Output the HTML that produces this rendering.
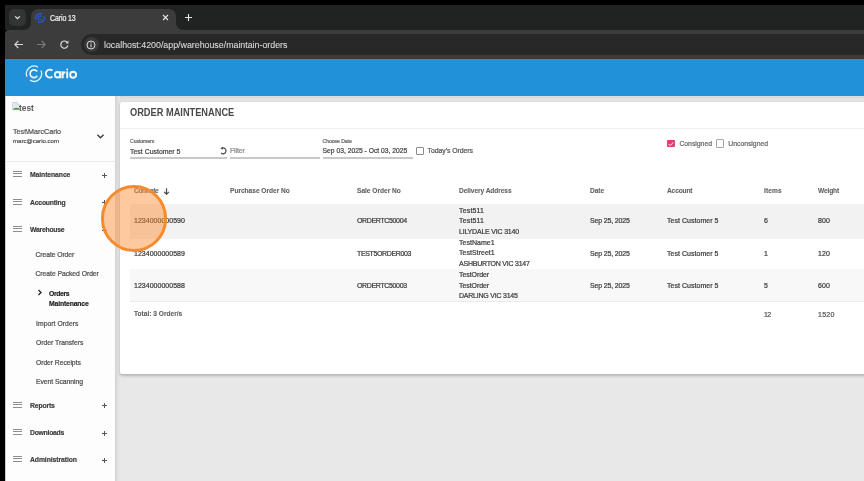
<!DOCTYPE html>
<html><head><meta charset="utf-8">
<style>
*{box-sizing:border-box;margin:0;padding:0}
html,body{width:864px;height:481px;overflow:hidden;background:#000;font-family:"Liberation Sans",sans-serif}
body{filter:blur(0.45px)}
.t{-webkit-text-stroke:0.22px currentColor}
.hd{-webkit-text-stroke:0.1px currentColor}
.sb{-webkit-text-stroke:0.18px currentColor}
.a{position:absolute}
.t{position:absolute;white-space:nowrap;line-height:1}
#tabstrip{left:5px;top:5px;width:859px;height:25px;background:#212222}
#ddbtn{left:9px;top:9px;width:17px;height:17px;border-radius:5px;background:#333434}
#tab{left:31px;top:9px;width:145px;height:22px;background:#3c3c3c;border-radius:7px 7px 0 0}
#toolbar{left:5px;top:30px;width:859px;height:29px;background:#3c3c3c;border-radius:4px 0 0 0}
#omni{left:81px;top:34px;width:800px;height:21px;border-radius:11px;background:#282828}
#infochip{left:84px;top:37px;width:15px;height:15px;border-radius:50%;background:#3a3a3a}
#header{left:5px;top:59px;width:859px;height:37.5px;background:#2192d9}
#hline{left:5px;top:58px;width:859px;height:1px;background:#33393d}
#page{left:5px;top:96px;width:859px;height:385px;background:linear-gradient(#d8d8d8 0,#dedede 2px,#e4e4e4 4px,#e8e8e8 6px)}
#sidebar{left:5px;top:96px;width:110px;height:385px;background:#fdfdfd;border-left:1px solid #cfcfcf}
#sbshadow{left:115px;top:96px;width:5px;height:385px;background:linear-gradient(to right,#d3d3d3 0,#d9d9d9 1.5px,#e1e1e1 3px,#e8e8e8 5px)}
#card{left:120px;top:102px;width:760px;height:272px;background:#fff;border-radius:2px;box-shadow:0 1.5px 3px rgba(0,0,0,.22),0 0 1px rgba(0,0,0,.12)}
.row{left:130px;width:740px;position:absolute}
.hd{color:#636363;font-weight:700;font-size:6.6px}
.td{color:#3c3c3c;font-size:7px}
.sb{color:#3d3d3d;font-weight:700;font-size:6.8px}
.sub{color:#505050;font-size:6.8px}
.ham{position:absolute;left:13px;width:9.2px;height:6px;border-top:1.2px solid #8e8e8e;border-bottom:1.2px solid #8e8e8e}
.ham:after{content:"";position:absolute;left:0;top:1.2px;width:9.2px;height:1.2px;background:#8e8e8e}
.plus{position:absolute;width:5px;height:5px}
.plus:before{content:"";position:absolute;left:0;top:1.9px;width:5px;height:1.2px;background:#555}
.plus:after{content:"";position:absolute;left:1.9px;top:0;width:1.2px;height:5px;background:#555}
</style></head><body>
<div id="tabstrip" class="a"></div>
<div id="ddbtn" class="a"></div>
<svg class="a" style="left:14px;top:14px" width="7" height="7" viewBox="0 0 7 7"><path d="M1.2 2.4 L3.5 4.7 L5.8 2.4" fill="none" stroke="#e6e6e6" stroke-width="1.3"/></svg>
<div id="tab" class="a"></div>
<!-- tab flares -->
<svg class="a" style="left:23px;top:22px" width="8" height="8" viewBox="0 0 8 8"><path d="M0 8 Q8 8 8 0 L8 8 Z" fill="#3c3c3c"/></svg>
<svg class="a" style="left:176px;top:22px" width="8" height="8" viewBox="0 0 8 8"><path d="M8 8 Q0 8 0 0 L0 8 Z" fill="#3c3c3c"/></svg>
<!-- favicon -->
<svg class="a" style="left:34px;top:11.5px" width="12" height="12" viewBox="0 0 12 12"><g fill="none" stroke="#2954ad"><path d="M8.28 2.35 A4.3 4.3 0 0 0 2.07 7.75" stroke-width="1.7"/><path d="M3.72 9.65 A4.3 4.3 0 0 0 9.93 4.25" stroke-width="1.7"/><path d="M7.64 4.85 A2.0 2.0 0 1 0 7.64 7.15" stroke-width="1.6"/></g></svg>
<div class="t" style="left:50px;top:13.5px;font-size:8.4px;color:#f0f0f0;letter-spacing:-0.15px;transform:scaleX(0.84);transform-origin:0 0">Cario 13</div>
<svg class="a" style="left:162px;top:14px" width="7" height="7" viewBox="0 0 7 7"><path d="M1 1 L6 6 M6 1 L1 6" stroke="#e6e6e6" stroke-width="1.1"/></svg>
<svg class="a" style="left:184px;top:13px" width="9" height="9" viewBox="0 0 9 9"><path d="M4.5 1 V8 M1 4.5 H8" stroke="#e6e6e6" stroke-width="1.1"/></svg>

<div id="toolbar" class="a"></div>
<!-- back/forward/reload -->
<svg class="a" style="left:13px;top:39px" width="11" height="11" viewBox="0 0 11 11"><path d="M10 5.5 H1.8 M5.3 2 L1.8 5.5 L5.3 9" fill="none" stroke="#d8d8d8" stroke-width="1.1"/></svg>
<svg class="a" style="left:36px;top:39px" width="11" height="11" viewBox="0 0 11 11"><path d="M1 5.5 H9.2 M5.7 2 L9.2 5.5 L5.7 9" fill="none" stroke="#7a7a7a" stroke-width="1.1"/></svg>
<svg class="a" style="left:59px;top:39px" width="11" height="11" viewBox="0 0 11 11"><path d="M8.6 4 A3.6 3.6 0 1 0 8.9 6.4" fill="none" stroke="#d8d8d8" stroke-width="1.2"/><path d="M9.5 1.6 V4.6 H6.5 Z" fill="#d8d8d8"/></svg>
<div id="omni" class="a"></div>
<div id="infochip" class="a"></div>
<svg class="a" style="left:86px;top:39.5px" width="10" height="10" viewBox="0 0 10 10"><circle cx="5" cy="5" r="4" fill="none" stroke="#d8d8d8" stroke-width="1"/><path d="M5 4.3 V7.3" stroke="#d8d8d8" stroke-width="1"/><circle cx="5" cy="2.9" r=".6" fill="#d8d8d8"/></svg>
<div class="t" style="left:104px;top:41.3px;font-size:8.85px;color:#d8d8d8;-webkit-text-stroke:0.1px currentColor;letter-spacing:-0.01px">localhost:4200/app/warehouse/maintain-orders</div>

<div id="header" class="a"></div><div id="hline" class="a"></div>
<svg class="a" style="left:24px;top:63px" width="22" height="22" viewBox="0 0 22 22"><path d="M14.03 4.26 A7.6 7.6 0 0 0 3.06 13.79" fill="none" stroke="#dff2fc" stroke-width="1.3"/><path d="M5.99 17.16 A7.6 7.6 0 0 0 16.94 7.61" fill="none" stroke="#dff2fc" stroke-width="1.3"/><path d="M13.27 8.58 A3.9 3.9 0 1 0 13.27 12.82" fill="none" stroke="#e8f6fd" stroke-width="1.7"/></svg>
<svg class="a" style="left:40px;top:62px" width="42" height="22" viewBox="0 0 42 22"><g fill="none" stroke="#f2f9fd" stroke-width="1.9"><path d="M12.4 8.6 A3.95 3.95 0 1 0 12.4 14.5"/><circle cx="17.6" cy="12.75" r="2.75"/><path d="M20.35 9.3 V16.3"/><path d="M22.7 9.3 V16.3 M22.7 12.9 A3.3 3.3 0 0 1 25.4 10.1"/><path d="M27.2 9.3 V16.3"/><circle cx="33.1" cy="12.75" r="2.95"/></g><circle cx="27.2" cy="7.5" r=".9" fill="#f2f9fd"/></svg>

<div id="page" class="a"></div>
<div id="sidebar" class="a"></div>
<div id="sbshadow" class="a"></div>

<!-- sidebar content -->
<svg class="a" style="left:12px;top:101.5px" width="8" height="8.5" viewBox="0 0 8 8.5"><path d="M.4 .4 H5.2 L7.4 2.6 V8.1 H.4 Z" fill="#dfe8f4" stroke="#c2c8d0" stroke-width=".7"/><path d="M5.2 .4 V2.6 H7.4" fill="#fff" stroke="#c2c8d0" stroke-width=".6"/><path d="M.8 7.8 Q2.5 4.8 7 6.4 V7.8 Z" fill="#4f9a3a"/></svg>
<div class="t" style="left:19px;top:103.6px;font-size:8.4px;color:#5a5a5a;font-weight:700;-webkit-text-stroke:0;letter-spacing:-0.035px">test</div>
<div class="t" style="left:13px;top:128.6px;font-size:7.15px;color:#555;letter-spacing:0.005px">Test\MarcCario</div>
<div class="t" style="left:13px;top:137.6px;font-size:6.07px;color:#505050;letter-spacing:0.011px">marc@cario.com</div>
<svg class="a" style="left:96px;top:133.2px" width="9" height="7" viewBox="0 0 9 7"><path d="M1.4 1.7 L4.5 4.8 L7.6 1.7" fill="none" stroke="#3a3a3a" stroke-width="1.3"/></svg>
<div class="a" style="left:6px;top:161.3px;width:109px;height:1px;background:#ebebeb"></div>

<div class="ham" style="top:171.1px"></div><div class="t sb" style="left:30px;top:172.4px;letter-spacing:-0.079px">Maintenance</div><div class="plus" style="left:102px;top:172.8px"></div>
<div class="ham" style="top:198.6px"></div><div class="t sb" style="left:30px;top:199.5px;letter-spacing:-0.192px">Accounting</div><div class="plus" style="left:102px;top:200.3px"></div>
<div class="ham" style="top:226.1px"></div><div class="t sb" style="left:30px;top:227.2px;letter-spacing:-0.225px">Warehouse</div><div class="plus" style="left:102px;top:227.8px"></div>

<div class="t sub" style="left:35.5px;top:251.8px;letter-spacing:-0.082px">Create Order</div>
<div class="t sub" style="left:35.5px;top:271.3px;letter-spacing:-0.048px">Create Packed Order</div>
<svg class="a" style="left:37px;top:288.5px" width="6" height="7" viewBox="0 0 6 7"><path d="M1.5 1 L4 3.5 L1.5 6" fill="none" stroke="#222" stroke-width="1.3"/></svg>
<div class="t sb" style="left:49px;top:290.8px;color:#222;letter-spacing:-0.342px">Orders</div>
<div class="t sb" style="left:49px;top:301.2px;color:#222;letter-spacing:-0.149px">Maintenance</div>
<div class="t sub" style="left:36px;top:320.7px;letter-spacing:0.04px">Import Orders</div>
<div class="t sub" style="left:36px;top:340.3px;letter-spacing:-0.015px">Order Transfers</div>
<div class="t sub" style="left:36px;top:359.6px;letter-spacing:-0.07px">Order Receipts</div>
<div class="t sub" style="left:36px;top:379.2px;letter-spacing:-0.041px">Event Scanning</div>

<div class="ham" style="top:401.6px"></div><div class="t sb" style="left:30px;top:402.5px;letter-spacing:-0.15px">Reports</div><div class="plus" style="left:102px;top:403.3px"></div>
<div class="ham" style="top:429.1px"></div><div class="t sb" style="left:30px;top:429.9px;letter-spacing:-0.246px">Downloads</div><div class="plus" style="left:102px;top:430.8px"></div>
<div class="ham" style="top:456.1px"></div><div class="t sb" style="left:30px;top:457.3px;letter-spacing:-0.077px">Administration</div><div class="plus" style="left:102px;top:457.8px"></div>

<div id="card" class="a"></div>

<div class="t" style="left:130px;top:106.6px;font-size:10.8px;font-weight:700;color:#4a4a4a;-webkit-text-stroke:0;transform:scaleX(0.856);transform-origin:0 0">ORDER MAINTENANCE</div>
<div class="a" style="left:120px;top:128px;width:744px;height:1px;background:#f0f0f0"></div>

<div class="t" style="left:130px;top:139.2px;font-size:5.1px;color:#666;letter-spacing:-0.047px">Customers</div>
<div class="t" style="left:130px;top:148.6px;font-size:6.95px;color:#444;letter-spacing:-0.003px">Test Customer 5</div>
<div class="a" style="left:130px;top:157.3px;width:97px;height:1.4px;background:#c8c8c8"></div>
<svg class="a" style="left:218px;top:146px" width="10" height="10" viewBox="0 0 10 10"><path d="M4.4 2.1 A2.9 2.9 0 1 1 3.15 7.05" fill="none" stroke="#4a4a4a" stroke-width="1.25"/><path d="M2.3 2.2 L4.9 0.7 L4.9 3.7 Z" fill="#4a4a4a"/></svg>
<div class="t" style="left:230px;top:148.2px;font-size:6.95px;color:#8a8a8a;letter-spacing:-0.141px">Filter</div>
<div class="a" style="left:229.5px;top:157.3px;width:90.5px;height:1.4px;background:#c8c8c8"></div>

<div class="t" style="left:322.5px;top:139.2px;font-size:5.1px;color:#666;letter-spacing:-0.04px">Choose Date</div>
<div class="t" style="left:322.5px;top:148.2px;font-size:6.76px;color:#444;letter-spacing:-0.002px">Sep 03, 2025 - Oct 03, 2025</div>
<div class="a" style="left:322.5px;top:157.3px;width:90px;height:1.4px;background:#c8c8c8"></div>
<div class="a" style="left:415.5px;top:147.2px;width:8.3px;height:8.2px;border:1.2px solid #8a8a8a;border-radius:1px"></div>
<div class="t" style="left:427.6px;top:148.4px;font-size:6.87px;color:#555;letter-spacing:-0.037px">Today's Orders</div>

<div class="a" style="left:667.2px;top:139.6px;width:8px;height:7.9px;background:#e63c79;border-radius:1px"></div>
<svg class="a" style="left:667.2px;top:139.8px" width="8" height="8" viewBox="0 0 8 8"><path d="M1.6 4 L3.2 5.6 L6.4 2.4" fill="none" stroke="#fff" stroke-width=".9"/></svg>
<div class="t" style="left:679.4px;top:141.2px;font-size:6.86px;color:#6a6a6a;letter-spacing:-0.023px">Consigned</div>
<div class="a" style="left:715.6px;top:139.4px;width:8.4px;height:8.2px;border:1.2px solid #a5a5a5;border-radius:1px"></div>
<div class="t" style="left:728.3px;top:141.2px;font-size:6.84px;color:#6a6a6a;letter-spacing:-0.016px">Unconsigned</div>

<!-- table header -->
<div class="t hd" style="left:134px;top:188.3px;letter-spacing:-0.345px">Connote</div>
<svg class="a" style="left:162.5px;top:187.5px" width="7" height="7" viewBox="0 0 7 7"><path d="M3.5 .3 V6.2 M1.1 3.9 L3.5 6.3 L5.9 3.9" fill="none" stroke="#4f4f4f" stroke-width="1.25"/></svg>
<div class="t hd" style="left:230px;top:188.3px;letter-spacing:-0.017px">Purchase Order No</div>
<div class="t hd" style="left:357px;top:188.3px;letter-spacing:-0.012px">Sale Order No</div>
<div class="t hd" style="left:459px;top:188.3px;letter-spacing:-0.067px">Delivery Address</div>
<div class="t hd" style="left:590px;top:188.3px;letter-spacing:-0.075px">Date</div>
<div class="t hd" style="left:667px;top:188.3px;letter-spacing:-0.147px">Account</div>
<div class="t hd" style="left:764px;top:188.3px;letter-spacing:0.111px">Items</div>
<div class="t hd" style="left:818px;top:188.3px;letter-spacing:-0.132px">Weight</div>

<div class="a" style="left:130px;top:204px;width:734px;height:33.5px;background:#f2f2f2"></div>
<div class="a" style="left:130px;top:269px;width:734px;height:32px;background:#f8f8f8"></div>
<div class="a" style="left:130px;top:237.5px;width:734px;height:1px;background:#f2f2f2"></div>
<div class="a" style="left:130px;top:301px;width:734px;height:1px;background:#ebebeb"></div>

<div class="t td" style="left:134px;top:217.3px;letter-spacing:0.024px">1234000000590</div>
<div class="t td" style="left:357px;top:217.3px;letter-spacing:-0.351px">ORDERTC50004</div>
<div class="t td" style="left:459px;top:207.2px;letter-spacing:0.166px">Test511</div>
<div class="t td" style="left:459px;top:217.2px;letter-spacing:0.166px">Test511</div>
<div class="t td" style="left:459px;top:227.6px;letter-spacing:-0.2px">LILYDALE VIC 3140</div>
<div class="t td" style="left:590px;top:217.3px;letter-spacing:-0.16px">Sep 25, 2025</div>
<div class="t td" style="left:667px;top:217.3px;letter-spacing:0.038px">Test Customer 5</div>
<div class="t td" style="left:764px;top:217.3px">6</div>
<div class="t td" style="left:818px;top:217.3px;letter-spacing:0.107px">800</div>

<div class="t td" style="left:134px;top:249.8px;letter-spacing:0.024px">1234000000589</div>
<div class="t td" style="left:357px;top:249.8px;letter-spacing:-0.362px">TEST5ORDER003</div>
<div class="t td" style="left:459px;top:239.0px;letter-spacing:0.036px">TestName1</div>
<div class="t td" style="left:459px;top:249.4px;letter-spacing:0.029px">TestStreet1</div>
<div class="t td" style="left:459px;top:260.4px;letter-spacing:-0.231px">ASHBURTON VIC 3147</div>
<div class="t td" style="left:590px;top:249.8px;letter-spacing:-0.16px">Sep 25, 2025</div>
<div class="t td" style="left:667px;top:249.8px;letter-spacing:0.038px">Test Customer 5</div>
<div class="t td" style="left:764px;top:249.8px">1</div>
<div class="t td" style="left:818px;top:249.8px;letter-spacing:0.107px">120</div>

<div class="t td" style="left:134px;top:281.8px;letter-spacing:0.024px">1234000000588</div>
<div class="t td" style="left:357px;top:281.8px;letter-spacing:-0.351px">ORDERTC50003</div>
<div class="t td" style="left:459px;top:271.2px;letter-spacing:-0.075px">TestOrder</div>
<div class="t td" style="left:459px;top:282.0px;letter-spacing:-0.075px">TestOrder</div>
<div class="t td" style="left:459px;top:292.0px;letter-spacing:-0.224px">DARLING VIC 3145</div>
<div class="t td" style="left:590px;top:281.8px;letter-spacing:-0.16px">Sep 25, 2025</div>
<div class="t td" style="left:667px;top:281.8px;letter-spacing:0.038px">Test Customer 5</div>
<div class="t td" style="left:764px;top:281.8px">5</div>
<div class="t td" style="left:818px;top:281.8px;letter-spacing:0.107px">600</div>

<div class="t hd" style="left:134px;top:311.2px;color:#606060;letter-spacing:0.002px">Total: 3 Order/s</div>
<div class="t td" style="color:#555;left:764px;top:311px;letter-spacing:-0.593px">12</div>
<div class="t td" style="color:#555;left:818px;top:311px;letter-spacing:0.24px">1520</div>

<!-- click indicator -->
<div class="a" style="left:100.5px;top:185.3px;width:66.8px;height:66.8px;border-radius:50%;border:3.2px solid #f68a2e;background:rgba(252,140,52,.47)"></div>

</body></html>
